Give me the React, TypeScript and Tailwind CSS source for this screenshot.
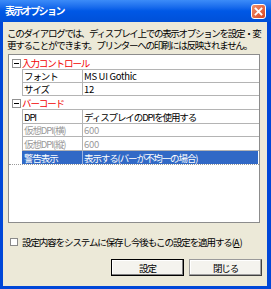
import React from "react";

type Row =
  | { kind: "cat"; title: string; tall: boolean }
  | { kind: "prop"; label: string; value: string; tall: boolean; muted?: boolean; selected?: boolean; latin?: boolean };

const rows: Row[] = [
  { kind: "cat", title: "入力コントロール", tall: true },
  { kind: "prop", label: "フォント", value: "MS UI Gothic", tall: false, latin: true },
  { kind: "prop", label: "サイズ", value: "12", tall: false, latin: true },
  { kind: "cat", title: "バーコード", tall: true },
  { kind: "prop", label: "DPI", value: "ディスプレイのDPIを使用する", tall: true },
  { kind: "prop", label: "仮想DPI(横)", value: "600", tall: false, muted: true, latin: true },
  { kind: "prop", label: "仮想DPI(縦)", value: "600", tall: true, muted: true, latin: true },
  { kind: "prop", label: "警告表示", value: "表示する(バーが不均一の場合)", tall: true, selected: true },
];

const MinusBox = () => (
  <div className="w-[9px] h-[9px] border border-[#919191] bg-white flex items-center justify-center">
    <div className="w-[5px] h-px bg-black" />
  </div>
);

const App = () => {
  return (
    <div className="w-[271px] h-[289px] flex flex-col bg-[#0047D8] font-['Noto_Sans_CJK_JP',sans-serif] text-[9.5px] tracking-[-1.1px] leading-[12px] text-black">
      {/* タイトルバー */}
      <div className="h-[22px] flex items-center justify-between pl-[5px] pr-[5px] bg-gradient-to-b from-[#3C8CF8] via-[#0058E6] to-[#0050D8]">
        <span className="text-white font-bold text-[10px] tracking-[-1.6px]">表示オプション</span>
        <div className="w-[15px] h-[15px] rounded-[3px] border border-white bg-gradient-to-br from-[#F0906A] to-[#D8431C] flex items-center justify-center">
          <svg width="9" height="9" viewBox="0 0 9 9">
            <path d="M1.5 1.5 L7.5 7.5 M7.5 1.5 L1.5 7.5" stroke="white" strokeWidth="1.8" strokeLinecap="square" />
          </svg>
        </div>
      </div>

      {/* 本体 */}
      <div className="flex-1 ml-[3px] mr-[4px] mb-[3px] bg-[#ECE9D8] flex flex-col">
        <p className="pl-[4px] pt-[5px] h-[32px] whitespace-nowrap tracking-[-1.3px]">
          このダイアログでは、ディスプレイ上での表示オプションを設定・変
          <br />
          更することができます。プリンターへの印刷には反映されません。
        </p>

        <div className="ml-[5px] w-[252px] h-[169px] border border-[#8C8C8C] bg-white pt-[1px]">
          {rows.map((r, i) =>
            r.kind === "cat" ? (
              <div key={i} className={`${r.tall ? "h-[14px]" : "h-[13px]"} flex`}>
                <div className="w-[13px] flex items-center pl-[3px]">
                  <MinusBox />
                </div>
                <div className="flex-1 flex items-center border-b border-[#B4B4B4] text-[#F20000]">{r.title}</div>
              </div>
            ) : (
              <div key={i} className={`${r.tall ? "h-[14px]" : "h-[13px]"} flex ${r.selected ? "border-b border-dotted border-[#9A9A9A]" : ""}`}>
                <div className="w-[13px]" />
                <div
                  className={`w-[61px] flex items-center pl-[1px] border-l border-r whitespace-nowrap ${
                    r.selected
                      ? "bg-[#3169C6] text-white border-[#3169C6] border-r-[#9DB4E0]"
                      : "border-b border-[#B4B4B4]"
                  } ${r.muted ? "text-[#9A9A9A]" : ""}`}
                >
                  {r.label}
                </div>
                <div
                  className={`flex-1 flex items-center pl-[1px] whitespace-pre ${
                    r.selected ? "bg-[#3169C6] text-white mr-[1px]" : "border-b border-[#B4B4B4]"
                  } ${r.muted ? "text-[#9A9A9A]" : ""} ${r.latin ? "tracking-[-0.3px]" : ""}`}
                >
                  {r.value}
                </div>
              </div>
            )
          )}
        </div>

        <label className="flex items-center mt-[13px] pl-[7px] h-[12px]">
          <span className="w-[8px] h-[8px] border border-[#8A8A8A] bg-white" />
          <span className="ml-[4px] whitespace-nowrap">
            設定内容をシステムに保存し今後もこの設定を適用する(<span className="underline tracking-normal">A</span>)
          </span>
        </label>

        <div className="flex justify-end gap-[5px] pr-[5px] mt-[11px]">
          <button className="w-[73px] h-[17px] border border-black bg-[#F4F3EE] shadow-[inset_-1px_-1px_0_#808080,inset_1px_1px_0_#FFFFFF] flex items-center justify-center">
            設定
          </button>
          <button className="w-[73px] h-[17px] border border-[#9A9A9A] border-r-[#404040] border-b-[#404040] bg-[#F4F3EE] shadow-[inset_-1px_-1px_0_#A0A0A0,inset_1px_1px_0_#FFFFFF] flex items-center justify-center">
            閉じる
          </button>
        </div>
      </div>
    </div>
  );
};

export default App;
